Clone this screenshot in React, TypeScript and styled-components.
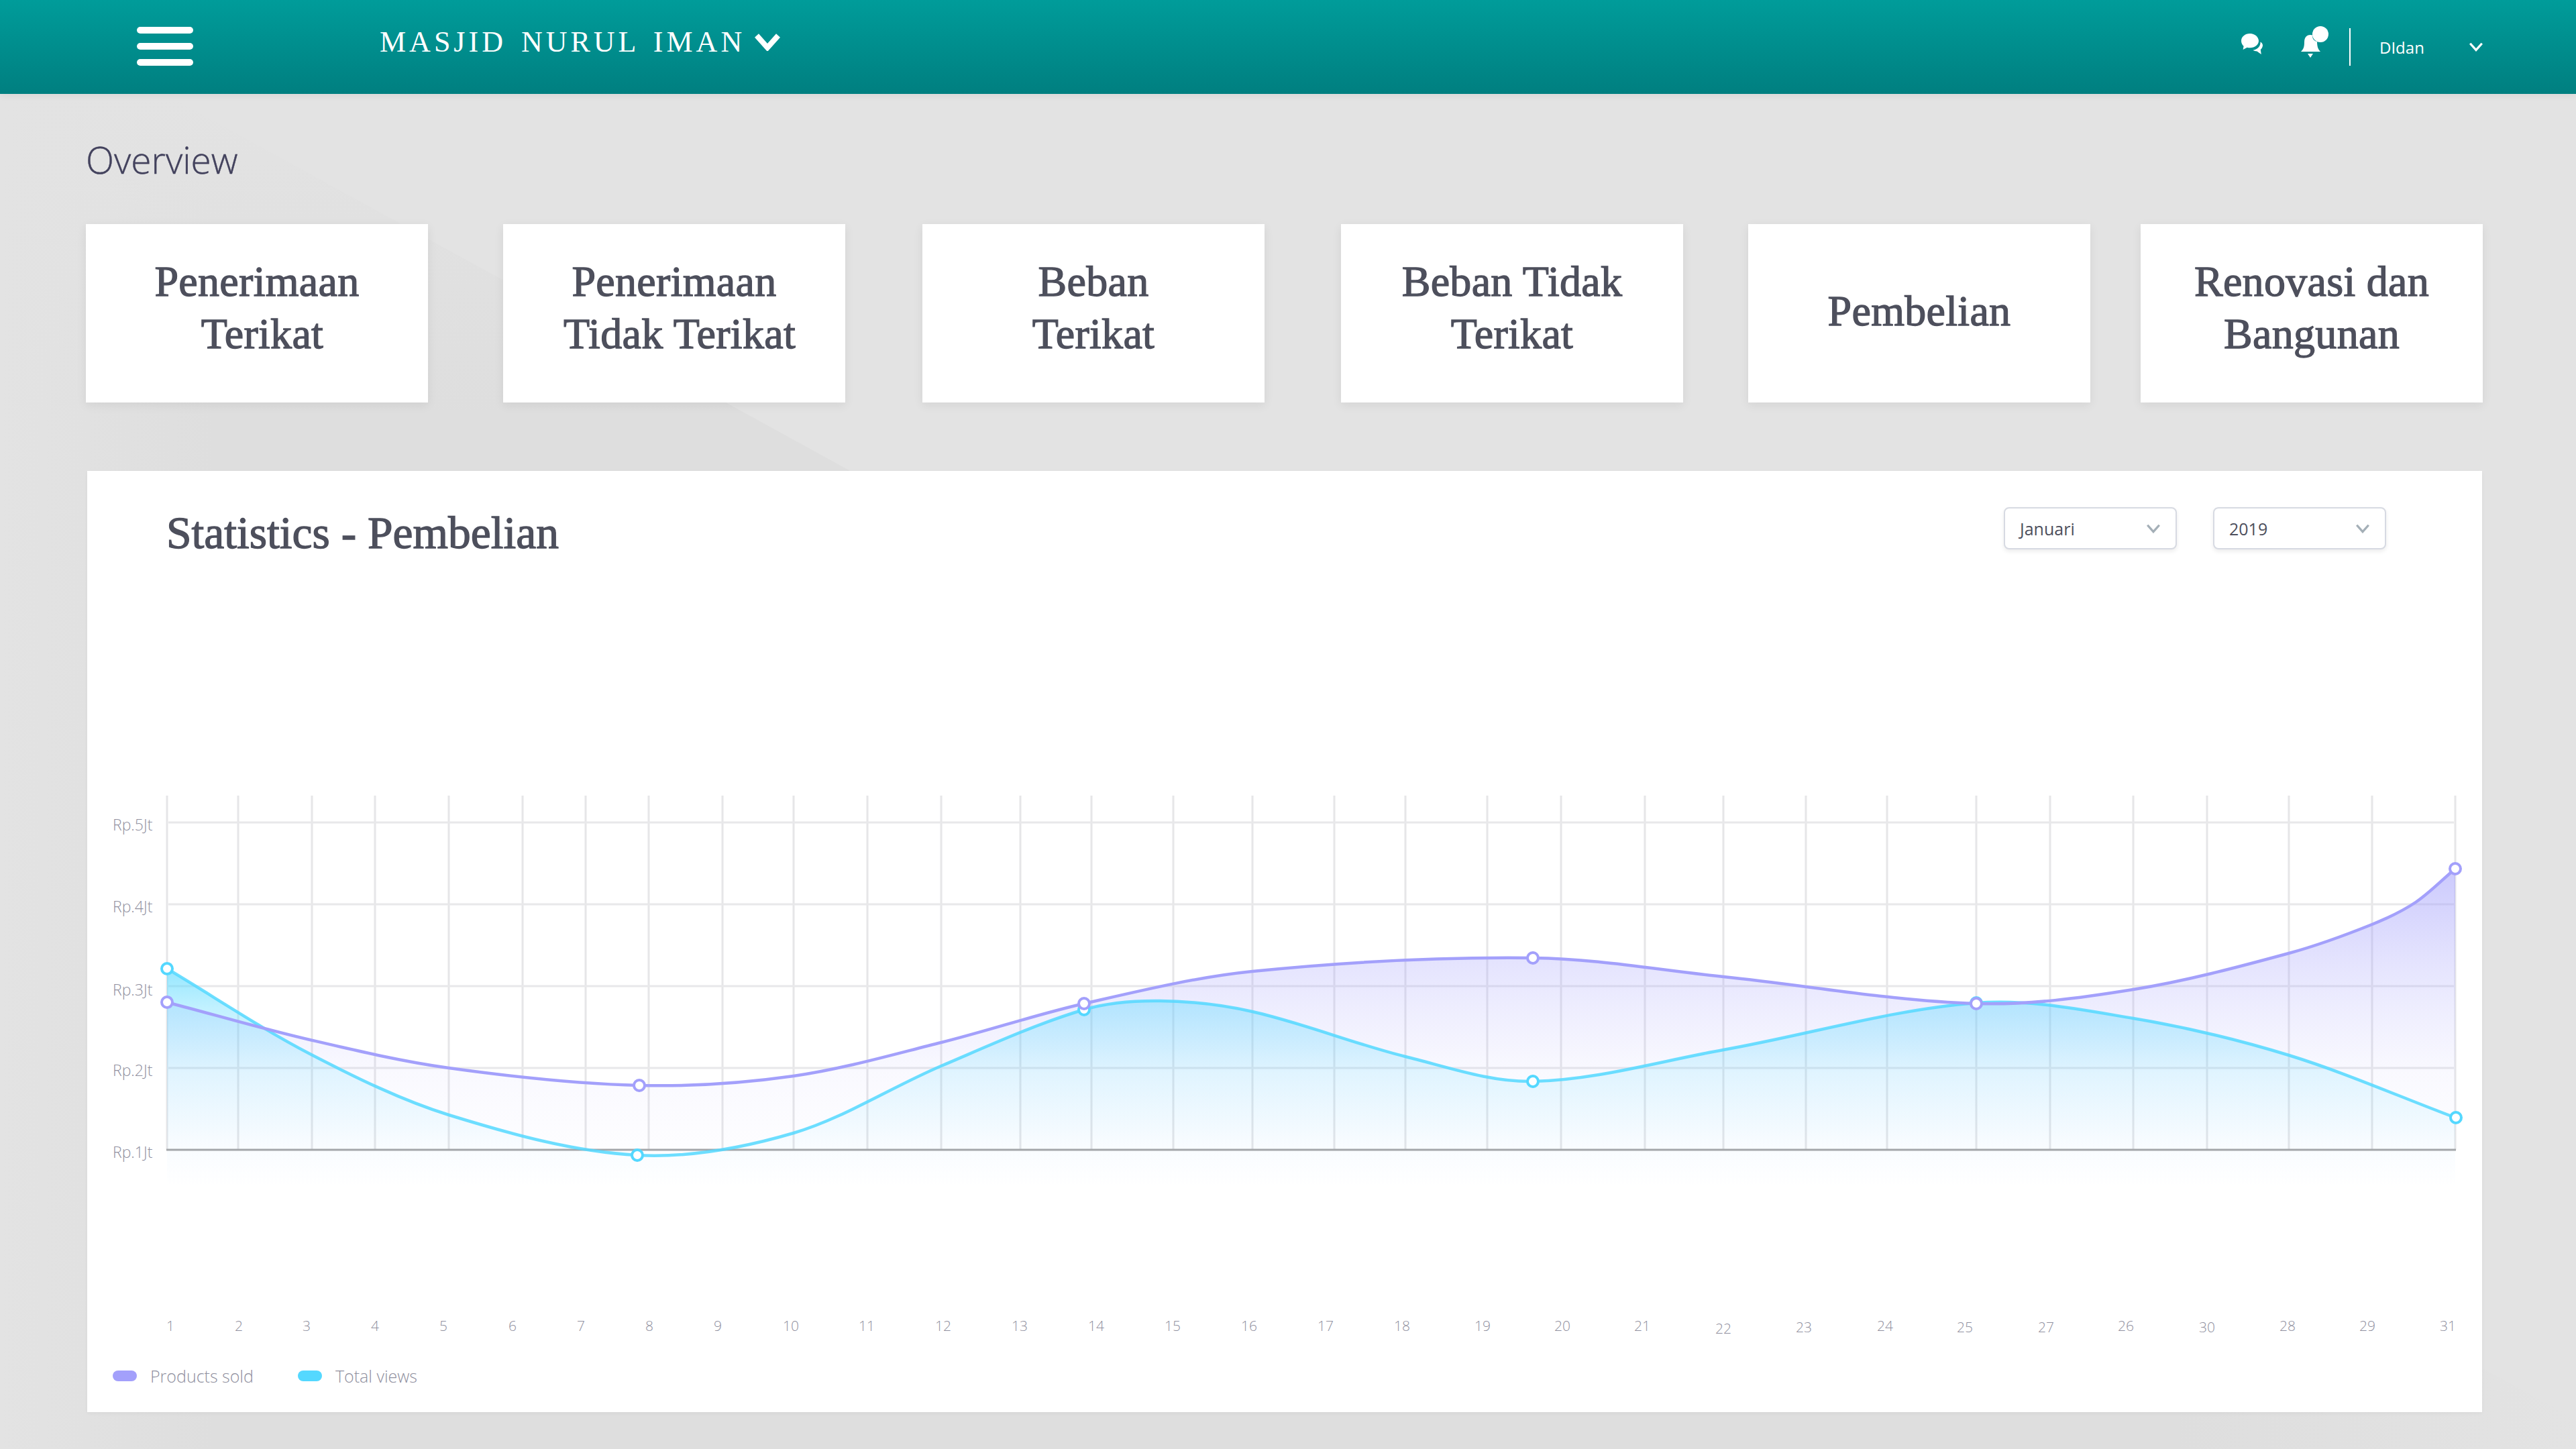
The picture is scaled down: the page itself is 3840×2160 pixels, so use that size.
import React from "react";
import styled, { createGlobalStyle } from "styled-components";

const GlobalStyle = createGlobalStyle`
  html, body {
    margin: 0;
    padding: 0;
  }

  body {
    width: 3840px;
    min-height: 2160px;
    font-family: "Open Sans", "Liberation Sans", sans-serif;
    background-color: #e3e3e3;
    background-image:
      linear-gradient(90deg, #e3e3e3 0, rgba(227, 227, 227, 0) 320px),
      linear-gradient(270deg, #e3e3e3 0, rgba(227, 227, 227, 0) 600px),
      linear-gradient(180deg, #e3e3e3 140px, rgba(227, 227, 227, 0) 620px),
      linear-gradient(208.8deg, rgba(0, 0, 0, 0) 1854px, #dedede 1855px);
    background-repeat: no-repeat;
    background-size: 3840px 2160px;
  }
`;

const Header = styled.header`
  display: flex;
  align-items: center;
  height: 140px;
  background: linear-gradient(180deg, #009c9a 0%, #007f80 100%);
  box-shadow: 0 3px 10px rgba(0, 0, 0, 0.05);
  color: #fff;
`;

const MenuButton = styled.div`
  display: flex;
  flex-direction: column;
  justify-content: space-between;
  width: 84px;
  height: 58px;
  margin: -2px 0 0 204px;
`;

const MenuBar = styled.span`
  display: block;
  height: 10px;
  border-radius: 5px;
  background: #fff;
`;

const Brand = styled.div`
  display: flex;
  align-items: center;
  gap: 13px;
  margin: -16px 0 0 278px;
  font-family: "Liberation Serif", serif;
  font-size: 44px;
  letter-spacing: 5px;
  word-spacing: 6px;
  white-space: nowrap;
`;

const HeaderRight = styled.div`
  display: flex;
  align-items: center;
  margin-left: auto;
  padding-right: 138px;
`;

const IconSlot = styled.span<{ $lift: number; $gap: number }>`
  display: flex;
  margin: ${({ $lift }) => -$lift * 2}px ${({ $gap }) => $gap}px 0 0;
`;

const Divider = styled.span`
  display: block;
  width: 2px;
  height: 56px;
  margin: 0 43px 0 30px;
  background: #fff;
`;

const UserName = styled.span`
  width: 133px;
  font-size: 24px;
  font-weight: 400;
`;

const Main = styled.main`
  padding: 0 137px 0 128px;
`;

const PageTitle = styled.h1`
  margin: 0;
  padding-top: 61px;
  height: 133px;
  font-size: 55px;
  line-height: 74px;
  font-weight: 300;
  color: #43425d;
  -webkit-text-stroke: 0.4px #43425d;
`;

const CardRow = styled.div`
  display: flex;
  align-items: flex-start;
`;

const Card = styled.div<{ $gap: number; $lines: number }>`
  display: flex;
  flex-direction: column;
  align-items: center;
  justify-content: center;
  flex: none;
  width: 510px;
  height: 266px;
  padding-bottom: ${({ $lines }) => ($lines > 1 ? 16 : 6)}px;
  box-sizing: border-box;
  margin-left: ${({ $gap }) => $gap}px;
  background: #fff;
  box-shadow: 0 4px 14px rgba(0, 0, 0, 0.07);
  font-family: "Liberation Serif", serif;
  font-size: 64px;
  line-height: 78px;
  letter-spacing: 0.3px;
  color: #4d4f5c;
  -webkit-text-stroke: 1.3px #4d4f5c;
`;

const CardLine = styled.span<{ $indent?: number }>`
  padding-left: ${({ $indent }) => $indent ?? 0}px;
  white-space: nowrap;
`;

const Panel = styled.section`
  display: flex;
  flex-direction: column;
  width: 3570px;
  height: 1403px;
  margin: 102px 0 0 2px;
  background: #fff;
  box-shadow: 0 2px 6px rgba(0, 0, 0, 0.04);
`;

const PanelHead = styled.div`
  display: flex;
  align-items: flex-start;
  justify-content: space-between;
  height: 468px;
  padding: 54px 143px 0 118px;
  box-sizing: border-box;
`;

const PanelTitle = styled.h2`
  margin: 0;
  font-family: "Liberation Serif", serif;
  font-size: 67.5px;
  line-height: 78px;
  font-weight: 400;
  color: #4d4f5c;
  -webkit-text-stroke: 1.3px #4d4f5c;
`;

const Filters = styled.div`
  display: flex;
  gap: 54px;
`;

const Select = styled.div`
  display: flex;
  align-items: center;
  justify-content: space-between;
  width: 258px;
  height: 63px;
  padding: 0 22px;
  box-sizing: border-box;
  border: 2px solid #d7dae2;
  border-radius: 8px;
  background: #fff;
  box-shadow: 0 3px 6px rgba(0, 0, 0, 0.08);
  font-size: 25px;
  color: #4d4f5c;
`;

const ChartSvg = styled.svg`
  display: block;
  flex: none;
`;

const AxisText = styled.text<{ $size: number }>`
  font-family: "Open Sans", "Liberation Sans", sans-serif;
  font-size: ${({ $size }) => $size}px;
  font-weight: 300;
  fill: #8f8f9e;
`;

const Legend = styled.div`
  display: flex;
  align-items: center;
  margin-top: 34px;
  padding-left: 38px;
`;

const LegendItem = styled.div`
  display: flex;
  align-items: center;
  gap: 20px;
  margin-right: 66px;
  font-size: 25px;
  font-weight: 300;
  color: #8f8f9e;
`;

const Swatch = styled.span<{ $color: string }>`
  display: block;
  width: 36px;
  height: 16px;
  border-radius: 8px;
  background: ${({ $color }) => $color};
`;

const cards = [
  { lines: ["Penerimaan", "Terikat"], gap: 0, indent: 16 },
  { lines: ["Penerimaan", "Tidak Terikat"], gap: 112, indent: 16 },
  { lines: ["Beban", "Terikat"], gap: 115, indent: 0 },
  { lines: ["Beban Tidak", "Terikat"], gap: 114, indent: 0 },
  { lines: ["Pembelian"], gap: 97, indent: 0 },
  { lines: ["Renovasi dan", "Bangunan"], gap: 75, indent: 0 },
];

const verticals = [
  249, 355, 465, 559, 669, 779, 873, 967, 1077, 1183, 1293, 1403, 1521, 1627,
  1749, 1867, 1989, 2095, 2217, 2327, 2452, 2569, 2692, 2813, 2946, 3056, 3180,
  3290, 3412, 3536, 3660,
];

const horizontals = [1226, 1348, 1470, 1592];

const yLabels = [
  { label: "Rp.5Jt", y: 1238 },
  { label: "Rp.4Jt", y: 1360 },
  { label: "Rp.3Jt", y: 1484 },
  { label: "Rp.2Jt", y: 1604 },
  { label: "Rp.1Jt", y: 1726 },
];

const xLabels: [string, number, number][] = [
  ["1", 254, 1984], ["2", 356, 1984], ["3", 457, 1984], ["4", 559, 1984],
  ["5", 661, 1984], ["6", 764, 1984], ["7", 866, 1984], ["8", 968, 1984],
  ["9", 1070, 1984], ["10", 1179, 1984], ["11", 1292, 1984], ["12", 1406, 1984],
  ["13", 1520, 1984], ["14", 1634, 1984], ["15", 1748, 1984], ["16", 1862, 1984],
  ["17", 1976, 1984], ["18", 2090, 1984], ["19", 2210, 1984], ["20", 2329, 1984],
  ["21", 2448, 1984], ["22", 2569, 1988], ["23", 2689, 1986], ["24", 2810, 1984],
  ["25", 2929, 1986], ["27", 3050, 1986], ["26", 3169, 1984], ["30", 3290, 1986],
  ["28", 3410, 1984], ["29", 3529, 1984], ["31", 3649, 1984],
];

type Point = [number, number];

const purple: Point[] = [
  [249, 1494], [462, 1550], [669, 1592], [953, 1618], [1183, 1604], [1403, 1554],
  [1616, 1496], [1867, 1448], [2285, 1428], [2569, 1456], [2946, 1496],
  [3180, 1475], [3412, 1421], [3536, 1378], [3601, 1345], [3660, 1295],
];

const cyan: Point[] = [
  [249, 1444], [462, 1571], [669, 1662], [950, 1722], [1183, 1689], [1403, 1589],
  [1616, 1505], [1729, 1492], [1867, 1508], [2095, 1575], [2285, 1612],
  [2569, 1565], [2946, 1495], [3180, 1518], [3412, 1573], [3660, 1666],
];

const purpleDots: Point[] = [[249, 1494], [953, 1618], [1616, 1496], [2285, 1428], [2946, 1496], [3660, 1295]];
const cyanDots: Point[] = [[249, 1444], [950, 1722], [1616, 1505], [2285, 1612], [2946, 1495], [3661, 1666]];

// spline through the sampled values, tangents scaled by x spacing
function smoothPath(points: Point[]) {
  const slope = (i: number) => {
    const a = points[Math.max(i - 1, 0)];
    const b = points[Math.min(i + 1, points.length - 1)];
    return (b[1] - a[1]) / (b[0] - a[0]);
  };
  let d = `M${points[0][0]} ${points[0][1]}`;
  for (let i = 0; i < points.length - 1; i++) {
    const [x1, y1] = points[i];
    const [x2, y2] = points[i + 1];
    const step = (x2 - x1) / 3;
    d += ` C${x1 + step} ${y1 + slope(i) * step} ${x2 - step} ${y2 - slope(i + 1) * step} ${x2} ${y2}`;
  }
  return d;
}

const FILL_BOTTOM = 1770;

function Chart() {
  const purpleLine = smoothPath(purple);
  const cyanLine = smoothPath(cyan);

  return (
    <ChartSvg width="3570" height="830" viewBox="130 1170 3570 830">
      <defs>
        <linearGradient id="purpleFill" gradientUnits="userSpaceOnUse" x1="0" y1="1295" x2="0" y2={FILL_BOTTOM}>
          <stop offset="0" stopColor="#a3a0fb" stopOpacity="0.56" />
          <stop offset="0.28" stopColor="#a3a0fb" stopOpacity="0.3" />
          <stop offset="0.43" stopColor="#a3a0fb" stopOpacity="0.19" />
          <stop offset="0.64" stopColor="#a3a0fb" stopOpacity="0.06" />
          <stop offset="1" stopColor="#a3a0fb" stopOpacity="0" />
        </linearGradient>
        <linearGradient id="cyanFill" gradientUnits="userSpaceOnUse" x1="0" y1="1444" x2="0" y2={FILL_BOTTOM}>
          <stop offset="0" stopColor="#54d8ff" stopOpacity="0.62" />
          <stop offset="0.18" stopColor="#54d8ff" stopOpacity="0.36" />
          <stop offset="0.48" stopColor="#54d8ff" stopOpacity="0.15" />
          <stop offset="0.8" stopColor="#54d8ff" stopOpacity="0.03" />
          <stop offset="1" stopColor="#54d8ff" stopOpacity="0" />
        </linearGradient>
      </defs>

      {verticals.map((x) => (
        <line key={x} x1={x} x2={x} y1="1186" y2="1714" stroke="#e6e6e8" strokeWidth="3" />
      ))}
      {horizontals.map((y) => (
        <line key={y} x1="251" x2="3658" y1={y} y2={y} stroke="#e8e8ea" strokeWidth="3" />
      ))}

      <path d={`${purpleLine} L3660 ${FILL_BOTTOM} L249 ${FILL_BOTTOM} Z`} fill="url(#purpleFill)" />
      <path d={`${cyanLine} L3660 ${FILL_BOTTOM} L249 ${FILL_BOTTOM} Z`} fill="url(#cyanFill)" />

      <line x1="248" x2="3661" y1="1714" y2="1714" stroke="#a3a6a9" strokeWidth="3" />

      <path d={cyanLine} fill="none" stroke="#54d8ff" strokeWidth="4.5" opacity="0.85" />
      <path d={purpleLine} fill="none" stroke="#a3a0fb" strokeWidth="4.5" />

      {cyanDots.map(([x, y]) => (
        <circle key={x} cx={x} cy={y} r="8" fill="#fff" stroke="#54d8ff" strokeWidth="4" />
      ))}
      {purpleDots.map(([x, y]) => (
        <circle key={x} cx={x} cy={y} r="8" fill="#fff" stroke="#a3a0fb" strokeWidth="4" />
      ))}

      {yLabels.map(({ label, y }) => (
        <AxisText key={label} $size={23} x="168" y={y}>
          {label}
        </AxisText>
      ))}
      {xLabels.map(([label, x, y]) => (
        <AxisText key={label} $size={21} x={x} y={y} textAnchor="middle">
          {label}
        </AxisText>
      ))}
    </ChartSvg>
  );
}

function Chevron({ size, width, color }: { size: number; width: number; color: string }) {
  return (
    <svg width={size} height={size * 0.7} viewBox="0 0 40 28" fill="none">
      <path d="M4 5 L20 23 L36 5" stroke={color} strokeWidth={width} />
    </svg>
  );
}

function ChatIcon() {
  return (
    <svg width="32" height="33" viewBox="0 0 32 33" fill="#fff">
      <path d="M13 0C5.800 0 0 4.700 0 11c0 3.100 1.400 5.900 3.600 7.800L2.600 24l6.200-3.300c1.300.4 2.700.6 4.200.6 7.200 0 13-4.600 13-10.300S20.200 0 13 0z" />
      <path d="M28.500 12.500c.6 6-4 11-11 12.300 1.700 1.100 3.800 1.700 6 1.700l6.300 4.500-1-7c2.200-2 3.200-4.500 3.200-6.500 0-1.800-1.100-3.800-3.500-5z" />
    </svg>
  );
}

function BellIcon() {
  return (
    <svg width="44" height="48" viewBox="0 0 44 48" fill="#fff">
      <path d="M2 38c3-3 5-6 5-14 0-7 3-11 9-11 1.500 0 2.500.2 3.500.6-1 4 1 8.400 6.500 9.400 0 8 2 12 5 15z" />
      <path d="M12 41h8l-4 6z" />
      <circle cx="31" cy="12" r="12" />
    </svg>
  );
}

export default function App() {
  return (
    <>
      <GlobalStyle />
      <Header>
        <MenuButton>
          <MenuBar />
          <MenuBar />
          <MenuBar />
        </MenuButton>
        <Brand>
          MASJID NURUL IMAN
          <Chevron size={40} width={8} color="#fff" />
        </Brand>
        <HeaderRight>
          <IconSlot $lift={4} $gap={55}>
            <ChatIcon />
          </IconSlot>
          <IconSlot $lift={7} $gap={0}>
            <BellIcon />
          </IconSlot>
          <Divider />
          <UserName>DIdan</UserName>
          <Chevron size={22} width={6} color="#fff" />
        </HeaderRight>
      </Header>
      <Main>
        <PageTitle>Overview</PageTitle>
        <CardRow>
          {cards.map((card) => (
            <Card key={card.lines.join(" ")} $gap={card.gap} $lines={card.lines.length}>
              {card.lines.map((line, index) => (
                <CardLine key={line} $indent={index === 1 ? card.indent : 0}>
                  {line}
                </CardLine>
              ))}
            </Card>
          ))}
        </CardRow>
        <Panel>
          <PanelHead>
            <PanelTitle>Statistics - Pembelian</PanelTitle>
            <Filters>
              <Select>
                Januari
                <Chevron size={22} width={6} color="#a4afb7" />
              </Select>
              <Select>
                2019
                <Chevron size={22} width={6} color="#a4afb7" />
              </Select>
            </Filters>
          </PanelHead>
          <Chart />
          <Legend>
            <LegendItem>
              <Swatch $color="#a3a0fb" />
              Products sold
            </LegendItem>
            <LegendItem>
              <Swatch $color="#54d8ff" />
              Total views
            </LegendItem>
          </Legend>
        </Panel>
      </Main>
    </>
  );
}
